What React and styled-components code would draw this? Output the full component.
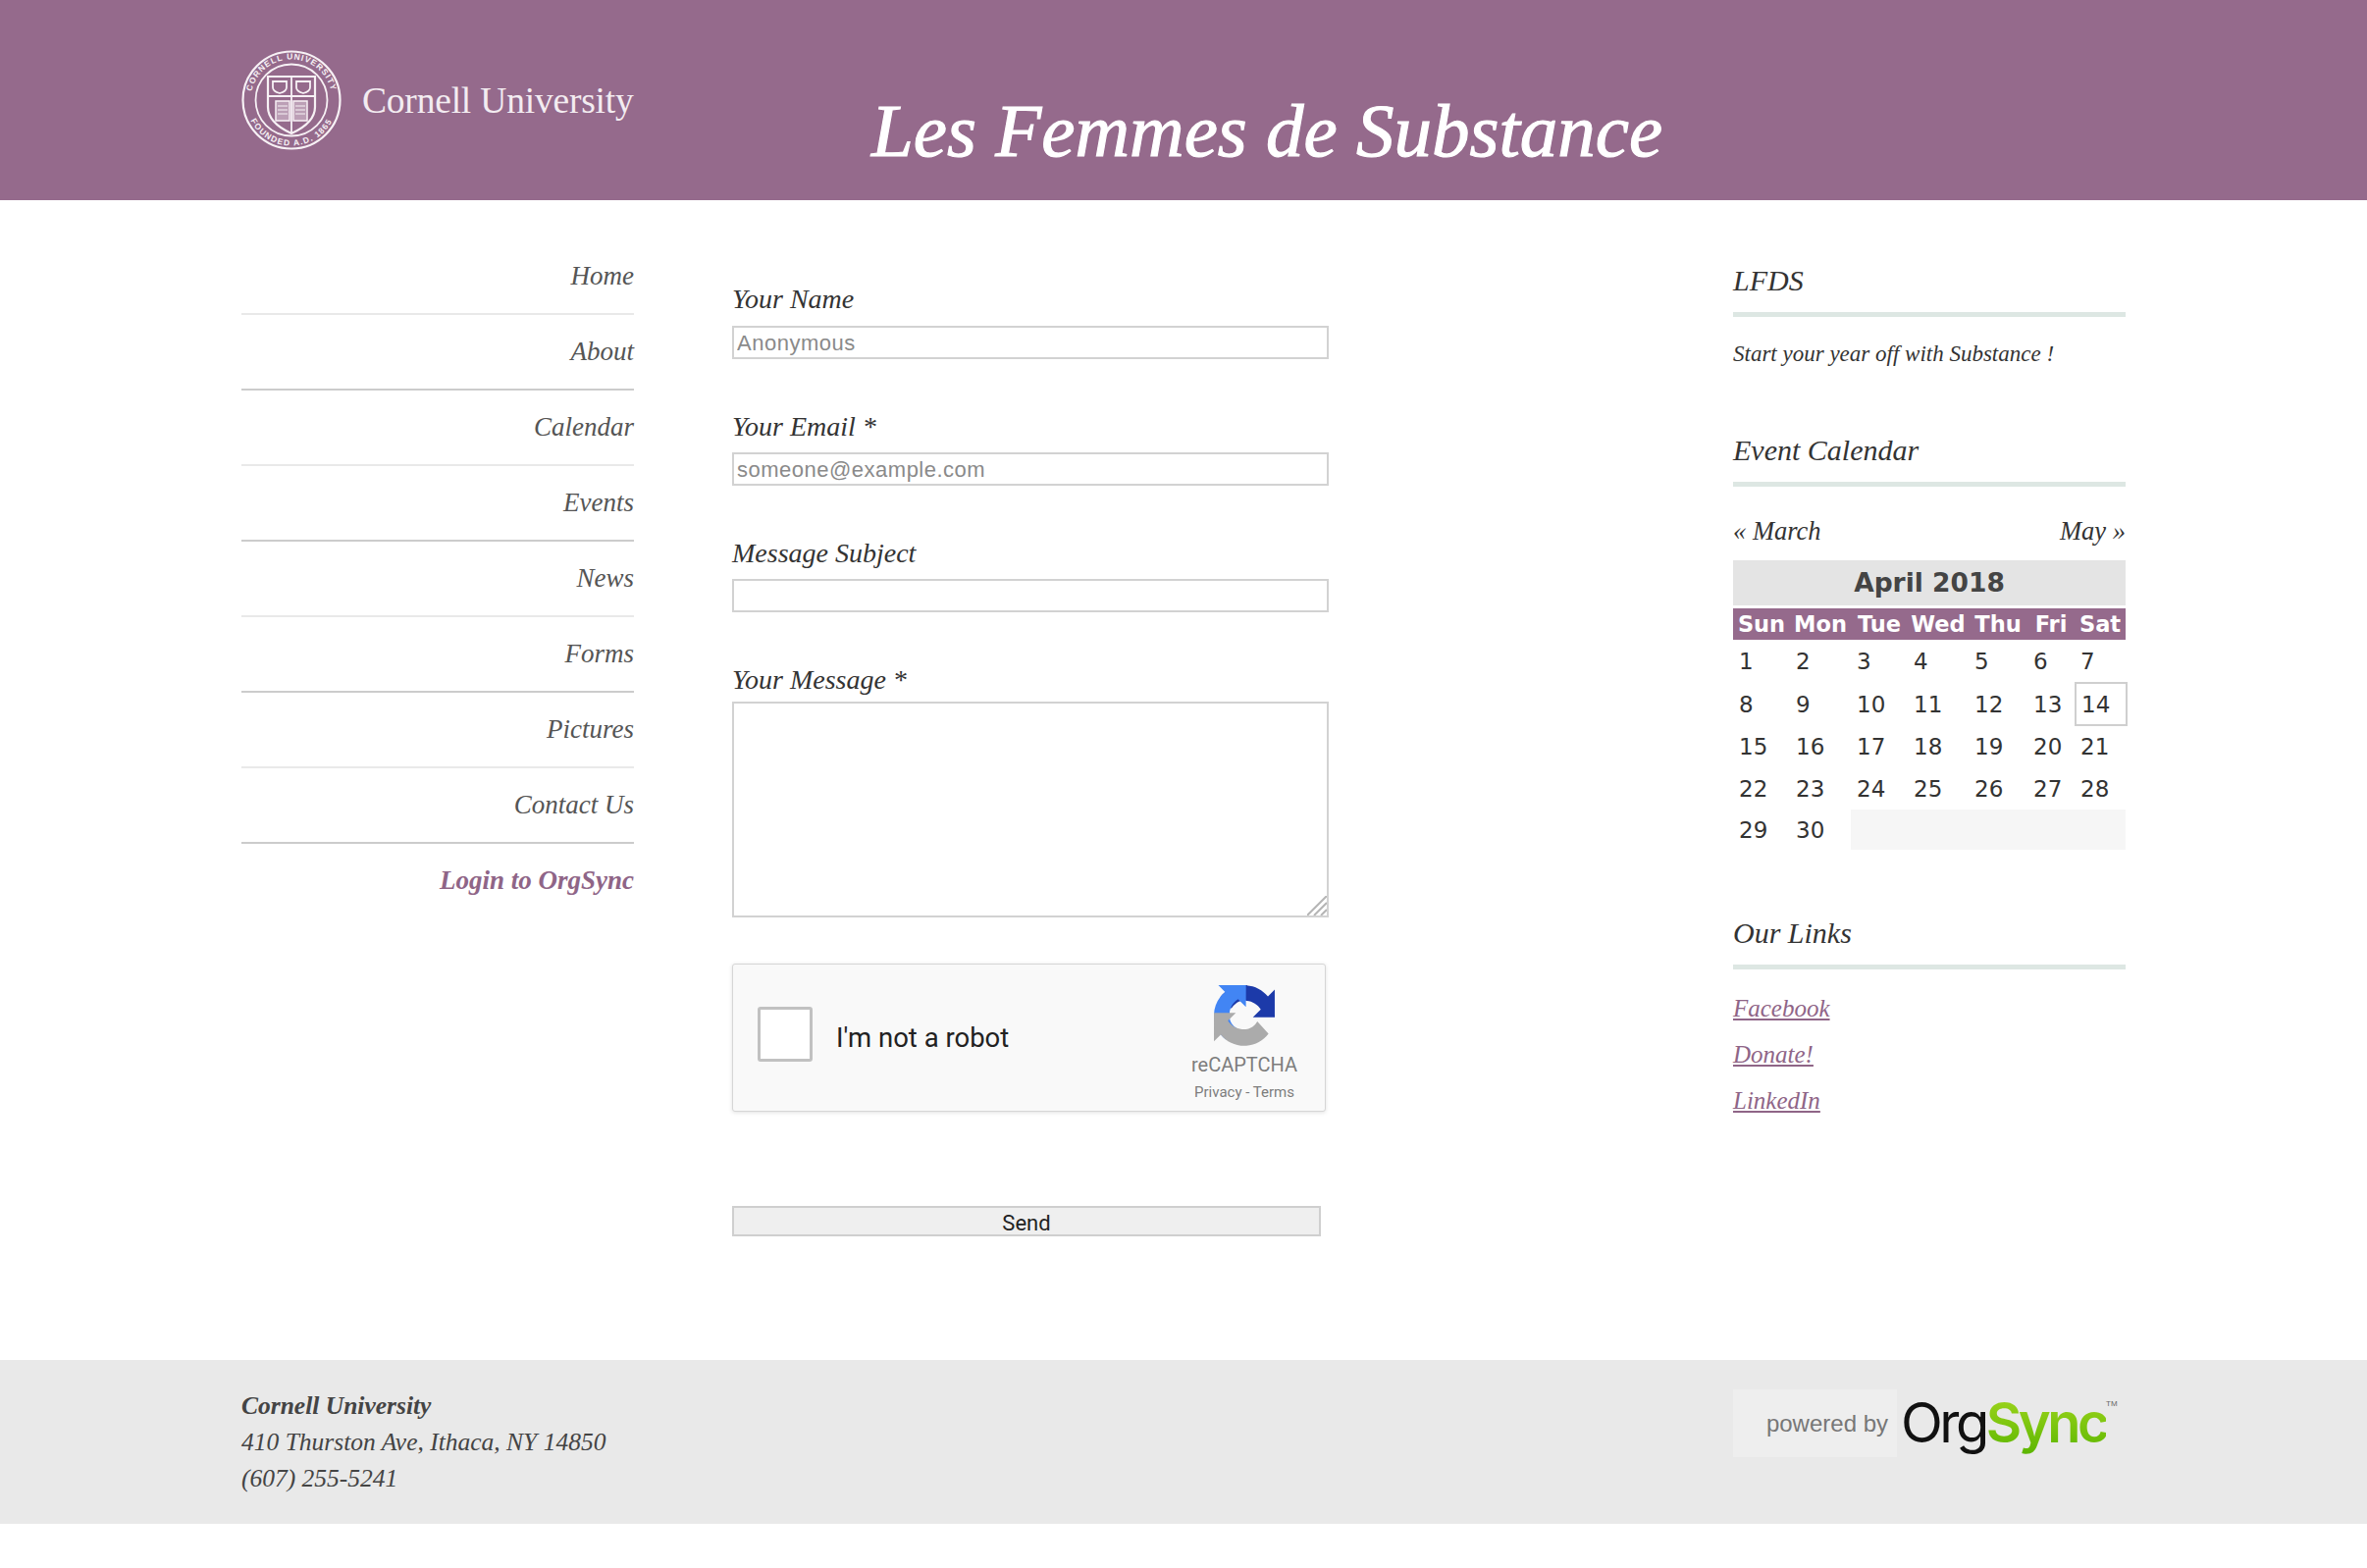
import React from 'react';
import styled, { createGlobalStyle } from 'styled-components';

const Global = createGlobalStyle`
  html, body { margin: 0; padding: 0; background: #fff; }
  body { font-family: "Liberation Serif", serif; color: #333; }
  * { box-sizing: border-box; }
`;

const Page = styled.div`
  width: 2412px;
  height: 1598px;
  overflow: hidden;
`;

const Wrap = styled.div`
  width: 1920px;
  margin: 0 auto;
`;

const Header = styled.header`
  height: 204px;
  background: #956a8c;
`;

const HeaderInner = styled(Wrap)`
  display: flex;
  align-items: flex-start;
`;

const Brand = styled.div`
  width: 400px;
  display: flex;
  align-items: center;
  gap: 21px;
  padding-top: 51px;
`;

const BrandName = styled.span`
  padding-top: 2px;
  font-size: 37.5px;
  line-height: 100px;
  color: #f3ecf1;
  white-space: nowrap;
  letter-spacing: -0.2px;
`;

const Title = styled.h1`
  margin: 83px 0 0 242px;
  font-size: 77px;
  line-height: 100px;
  font-weight: normal;
  font-style: italic;
  color: #fff;
  -webkit-text-stroke: 1.1px #fff;
  white-space: nowrap;
`;

const Main = styled(Wrap)`
  display: flex;
  align-items: flex-start;
  height: 1182px;
`;

const Nav = styled.nav`
  width: 400px;
  margin-top: 40px;
`;

const NavItem = styled.a`
  display: block;
  height: 77px;
  line-height: 74px;
  text-align: right;
  font-size: 27px;
  font-style: italic;
  color: ${p => (p.$login ? '#8f6587' : '#555')};
  font-weight: ${p => (p.$login ? 'bold' : 'normal')};
  border-bottom: 2px solid ${p => (p.$login ? 'transparent' : p.$dark ? '#ccc' : '#e9e9e9')};
`;

const Form = styled.form`
  width: 608px;
  margin-left: 100px;
  padding-top: 83px;
`;

const Field = styled.div`
  margin-bottom: ${p => (p.$last ? '47px' : '50px')};
`;

const Label = styled.label`
  display: block;
  height: 36px;
  padding-top: ${p => (p.$low ? '1px' : '0')};
  line-height: 36px;
  margin-bottom: ${p => (p.$tight ? '5px' : '9px')};
  font-size: 28px;
  font-style: italic;
  color: #333;
`;

const TextInput = styled.input`
  display: block;
  width: 100%;
  height: 34px;
  padding: 2px 3px 0;
  border: 2px solid #d2d2d2;
  border-radius: 0;
  outline: none;
  background: #fff;
  font-family: "Liberation Sans", sans-serif;
  font-size: 22px;
  letter-spacing: 0.5px;
  &::placeholder { color: #8a8a8a; opacity: 1; }
`;

const AreaWrap = styled.div`
  position: relative;
  height: 220px;
`;

const TextArea = styled.textarea`
  display: block;
  width: 100%;
  height: 100%;
  border: 2px solid #d2d2d2;
  border-radius: 0;
  outline: none;
  resize: none;
  background: #fff;
`;

const Grip = styled.svg`
  position: absolute;
  right: 2px;
  bottom: 2px;
`;

const Captcha = styled.div`
  width: 605px;
  height: 151px;
  display: flex;
  align-items: center;
  padding-left: 25px;
  background: #f9f9f9;
  border: 1px solid #d6d6d6;
  border-radius: 3px;
  box-shadow: 0 1px 4px rgba(0, 0, 0, 0.12);
`;

const CheckBox = styled.span`
  width: 56px;
  height: 56px;
  margin-top: -8px;
  background: #fff;
  border: 3px solid #c1c1c1;
  border-radius: 3px;
`;

const CaptchaText = styled.span`
  margin-left: 24px;
  font-family: Roboto, sans-serif;
  font-size: 27.5px;
  color: #222;
`;

const CaptchaBrand = styled.div`
  margin-left: auto;
  width: 164px;
  display: flex;
  flex-direction: column;
  align-items: center;
  padding-top: 12px;
  font-family: Roboto, sans-serif;
  color: #7d7d7d;
`;

const CaptchaName = styled.span`
  margin-top: 6px;
  font-size: 20px;
  line-height: 26px;
`;

const CaptchaLinks = styled.span`
  margin-top: 5px;
  font-size: 15px;
  line-height: 20px;
`;

const Send = styled.button`
  display: block;
  width: 600px;
  height: 31px;
  margin-top: 96px;
  padding: 3px 0 0;
  background: #efefef;
  border: 2px solid #cfcfcf;
  border-radius: 0;
  font-family: Roboto, sans-serif;
  font-size: 22px;
  color: #222;
`;

const Aside = styled.aside`
  width: 400px;
  margin-left: auto;
  padding-top: 64px;
`;

const SideHead = styled.h3`
  margin: ${p => p.$gap || 0}px 0 0;
  height: 55px;
  line-height: 36px;
  font-size: 30px;
  font-weight: normal;
  font-style: italic;
  color: #333;
  border-bottom: 5px solid #dde7e3;
`;

const Blurb = styled.p`
  margin: 21px 0 0;
  font-size: 23px;
  line-height: 34px;
  font-style: italic;
  color: #333;
`;

const CalNav = styled.div`
  display: flex;
  justify-content: space-between;
  margin-top: 28px;
  font-size: 26.5px;
  line-height: 34px;
  font-style: italic;
  color: #333;
`;

const CalTitle = styled.div`
  height: 46px;
  margin-top: 13px;
  background: #e4e4e4;
  text-align: center;
  font-family: "DejaVu Sans", sans-serif;
  font-weight: bold;
  font-size: 26.5px;
  line-height: 46px;
  color: #444;
`;

const CalGrid = styled.div`
  display: grid;
  grid-template-columns: 58px 62px 58px 62px 60px 48px 52px;
  grid-template-rows: 32px 43px 45px 42px 43px 41px;
  margin-top: 3px;
  font-family: "DejaVu Sans", sans-serif;
  font-size: 23px;
  color: #333;
`;

const DayHead = styled.div`
  background: #956a8c;
  color: #fff;
  font-size: 22.5px;
  font-weight: bold;
  text-align: center;
  line-height: 32px;
  white-space: nowrap;
`;

const DayCell = styled.div`
  display: flex;
  align-items: center;
  padding-left: 6px;
  border: ${p => (p.$today ? '2px solid #cfcfcf' : 'none')};
  ${p => p.$today && 'margin-right: -2px; padding-left: 5px;'}
`;

const EmptyCell = styled.div`
  grid-column: 3 / 8;
  background: #f6f6f6;
`;

const LinkList = styled.div`
  display: flex;
  flex-direction: column;
  margin-top: 23px;
  gap: 14px;
`;

const SideLink = styled.a`
  font-size: 25px;
  line-height: 33px;
  font-style: italic;
  color: #8f6587;
  text-decoration: underline;
`;

const Footer = styled.footer`
  height: 167px;
  background: #e9e9e9;
`;

const FooterInner = styled(Wrap)`
  display: flex;
  justify-content: space-between;
  padding-top: 28px;
`;

const Address = styled.div`
  font-size: 25.5px;
  line-height: 37px;
  font-style: italic;
  color: #444;
`;

const PoweredBy = styled.div`
  width: 400px;
  display: flex;
  align-items: center;
  height: 69px;
  margin-top: 2px;
  position: relative;
`;

const PoweredBox = styled.div`
  flex: none;
  width: 167px;
  height: 69px;
  padding-right: 9px;
  background: #eeeeee;
  display: flex;
  align-items: center;
  justify-content: flex-end;
  font-family: "Liberation Sans", sans-serif;
  font-size: 24px;
  color: #777;
`;

const OrgLogo = styled.div`
  margin-left: 4px;
  font-family: Inter, sans-serif;
  font-size: 56px;
  line-height: 69px;
  letter-spacing: -3.5px;
  color: #111;
  white-space: nowrap;
`;

const Sync = styled.span`
  font-weight: 600;
  background: linear-gradient(#a5d820, #5ab500);
  -webkit-background-clip: text;
  background-clip: text;
  color: transparent;
`;

const Tm = styled.span`
  position: absolute;
  top: 10px;
  left: 380px;
  font-family: "Liberation Sans", sans-serif;
  font-size: 8px;
  line-height: 10px;
  color: #666;
`;

const Seal = () => (
  <svg width="102" height="102" viewBox="0 0 102 102" fill="none" stroke="#f7f1f5">
    <circle cx="51" cy="51" r="49.5" strokeWidth="2.2" />
    <circle cx="51" cy="51" r="36.5" strokeWidth="1.8" />
    <path id="sealTop" d="M9.5 51a41.5 41.5 0 0 1 83 0" stroke="none" />
    <path id="sealBot" d="M4.5 51a46.5 46.5 0 0 0 93 0" stroke="none" />
    <text fontFamily="Liberation Sans" fontSize="8.5" fontWeight="bold" fill="#f7f1f5" stroke="none" letterSpacing="1">
      <textPath href="#sealTop" startOffset="50%" textAnchor="middle">CORNELL UNIVERSITY</textPath>
    </text>
    <text fontFamily="Liberation Sans" fontSize="8.5" fontWeight="bold" fill="#f7f1f5" stroke="none" letterSpacing="1.2">
      <textPath href="#sealBot" startOffset="50%" textAnchor="middle">FOUNDED A.D. 1865</textPath>
    </text>
    <path d="M27 27h48v31c0 14-13 22-24 27C40 80 27 72 27 58z" strokeWidth="2.2" />
    <path d="M27 47h48M51 27v58" strokeWidth="1.8" />
    <path d="M32 32h14v6c0 3-3 5-7 6-4-1-7-3-7-6zM56 32h14v6c0 3-3 5-7 6-4-1-7-3-7-6z" strokeWidth="1.8" />
    <path d="M35 52h14v20H35zM53 52h14v20H53z" strokeWidth="1.5" fill="#f7f1f5" fillOpacity="0.4" />
    <path d="M37 57h10M37 61h10M37 65h10M55 57h10M55 61h10M55 65h10" strokeWidth="1" />
  </svg>
);

const RecaptchaIcon = () => (
  <svg width="62" height="62" viewBox="0 0 64 64">
    <path fill="#1c3aa9" d="M64 31.955l-.033-1.37V4.687l-7.16 7.16C50.948 4.674 42.033.089 32.05.089c-10.4 0-19.622 4.96-25.458 12.64l11.736 11.86a15.55 15.55 0 0 1 4.754-5.334c2.05-1.6 4.95-2.906 9.968-2.906.606 0 1.074.07 1.418.2 6.217.49 11.605 3.92 14.8 8.9l-8.308 8.308 26.32.1" />
    <path fill="#4285f4" d="M31.862 0l-1.37.033H4.594l7.16 7.16C4.58 13.052-.006 21.967-.006 31.95c0 10.4 4.96 19.622 12.64 25.458l11.86-11.736a15.55 15.55 0 0 1-5.334-4.754c-1.6-2.05-2.906-4.95-2.906-9.968 0-.606.07-1.074.2-1.418.49-6.217 3.92-11.605 8.9-14.8l8.308 8.308.1-26.32" />
    <path fill="#ababab" d="M.001 31.95l.033 1.37v25.898l7.16-7.16c5.86 7.173 14.775 11.76 24.76 11.76 10.4 0 19.622-4.96 25.458-12.64L45.676 38.32a15.55 15.55 0 0 1-4.754 5.334c-2.05 1.6-4.95 2.906-9.968 2.906-.606 0-1.074-.07-1.418-.2-6.217-.49-11.605-3.92-14.8-8.9l8.308-8.308-26.32-.1" />
  </svg>
);

const navLinks = ['Home', 'About', 'Calendar', 'Events', 'News', 'Forms', 'Pictures', 'Contact Us'];
const dayNames = ['Sun', 'Mon', 'Tue', 'Wed', 'Thu', 'Fri', 'Sat'];
const days = Array.from({ length: 30 }, (_, i) => i + 1);

export default function App() {
  return (
    <Page>
      <Global />
      <Header>
        <HeaderInner>
          <Brand>
            <Seal />
            <BrandName>Cornell University</BrandName>
          </Brand>
          <Title>Les Femmes de Substance</Title>
        </HeaderInner>
      </Header>

      <Main>
        <Nav>
          {navLinks.map((name, i) => (
            <NavItem key={name} $dark={i % 2 === 1}>{name}</NavItem>
          ))}
          <NavItem $login>Login to OrgSync</NavItem>
        </Nav>

        <Form>
          <Field>
            <Label>Your Name</Label>
            <TextInput placeholder="Anonymous" />
          </Field>
          <Field>
            <Label $low>Your Email *</Label>
            <TextInput placeholder="someone@example.com" />
          </Field>
          <Field>
            <Label $low>Message Subject</Label>
            <TextInput />
          </Field>
          <Field $last>
            <Label $low $tight>Your Message *</Label>
            <AreaWrap>
              <TextArea />
              <Grip width="20" height="20" viewBox="0 0 20 20" stroke="#b5b5b5" strokeWidth="2">
                <path d="M20 0L0 20M20 7L7 20M20 14L14 20" />
              </Grip>
            </AreaWrap>
          </Field>
          <Captcha>
            <CheckBox />
            <CaptchaText>I'm not a robot</CaptchaText>
            <CaptchaBrand>
              <RecaptchaIcon />
              <CaptchaName>reCAPTCHA</CaptchaName>
              <CaptchaLinks>Privacy - Terms</CaptchaLinks>
            </CaptchaBrand>
          </Captcha>
          <Send type="button">Send</Send>
        </Form>

        <Aside>
          <SideHead>LFDS</SideHead>
          <Blurb>Start your year off with Substance !</Blurb>
          <SideHead $gap={63}>Event Calendar</SideHead>
          <CalNav>
            <span>« March</span>
            <span>May »</span>
          </CalNav>
          <CalTitle>April 2018</CalTitle>
          <CalGrid>
            {dayNames.map(d => <DayHead key={d}>{d}</DayHead>)}
            {days.map(d => <DayCell key={d} $today={d === 14}>{d}</DayCell>)}
            <EmptyCell />
          </CalGrid>
          <SideHead $gap={67}>Our Links</SideHead>
          <LinkList>
            <SideLink>Facebook</SideLink>
            <SideLink>Donate!</SideLink>
            <SideLink>LinkedIn</SideLink>
          </LinkList>
        </Aside>
      </Main>

      <Footer>
        <FooterInner>
          <Address>
            <b>Cornell University</b><br />
            410 Thurston Ave, Ithaca, NY 14850<br />
            (607) 255-5241
          </Address>
          <PoweredBy>
            <PoweredBox>powered by</PoweredBox>
            <OrgLogo>Org<Sync>Sync</Sync></OrgLogo>
            <Tm>TM</Tm>
          </PoweredBy>
        </FooterInner>
      </Footer>
    </Page>
  );
}
